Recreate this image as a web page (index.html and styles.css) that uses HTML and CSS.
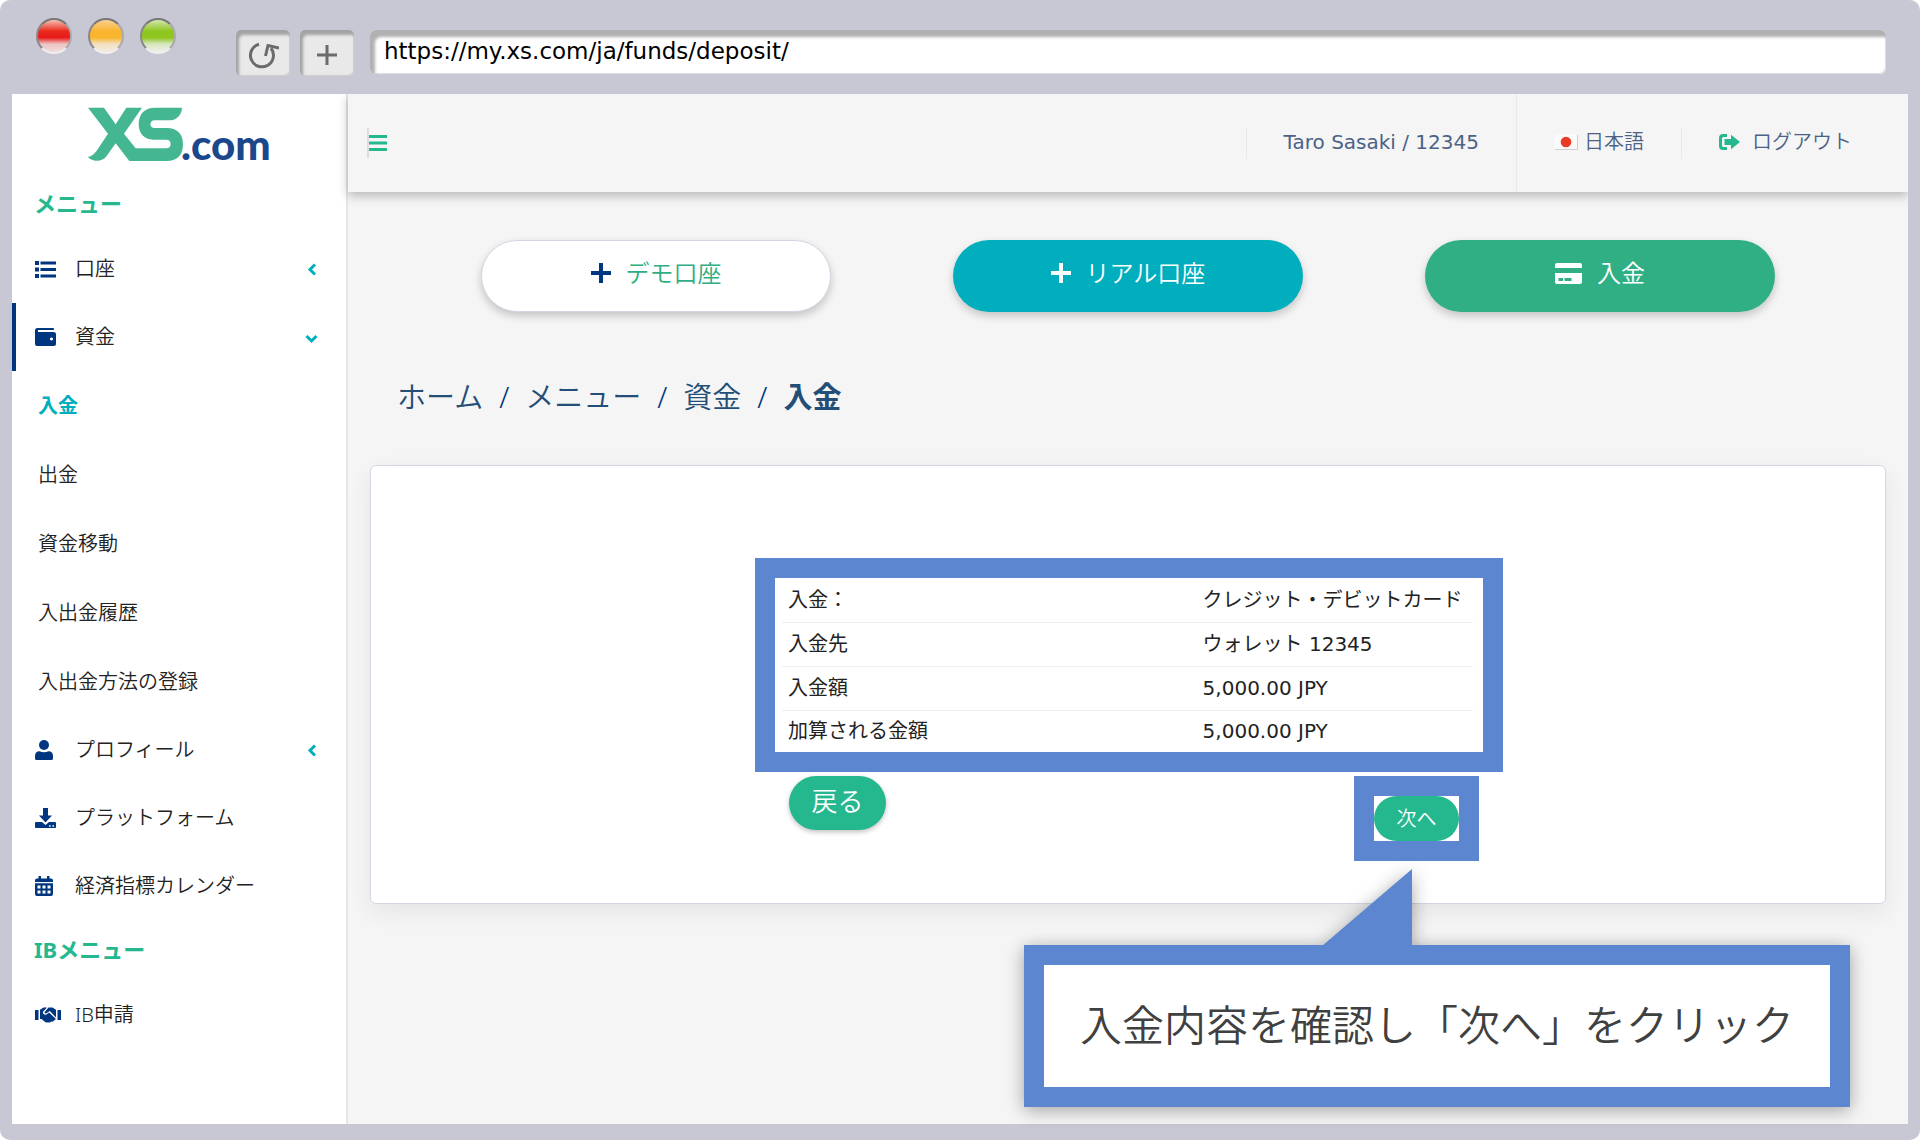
FILE: index.html
```html
<!DOCTYPE html>
<html lang="ja">
<head>
<meta charset="utf-8">
<meta name="viewport" content="width=device-width, initial-scale=1">
<title>XS.com 入金</title>
<link rel="stylesheet" href="styles.css">
</head>
<body>
<div class="browser">
  <div class="browser-bar">
    <div class="lights">
      <span class="light light-red"></span>
      <span class="light light-amber"></span>
      <span class="light light-green"></span>
    </div>
    <div class="browser-buttons">
      <button class="tool" type="button" aria-label="再読み込み">
        <svg width="32" height="28" viewBox="0 0 32 28" fill="none" stroke="#6b6b6b" stroke-width="3"><path d="M12 3.2A11.5 11.5 0 1 0 24 7.200" /><path d="M18.500 15L21 4.500L32 7" /></svg>
      </button>
      <button class="tool" type="button" aria-label="新しいタブ">
        <svg width="22" height="22" viewBox="0 0 22 22" fill="none" stroke="#6b6b6b" stroke-width="3"><path d="M11 1V21M1 11H21"/></svg>
      </button>
    </div>
    <input class="address" type="text" aria-label="アドレス" value="https://my.xs.com/ja/funds/deposit/">
  </div>

  <div class="page">
    <aside class="sidebar">
      <a class="logo" href="#" aria-label="XS.com">
        <svg width="200" height="66" viewBox="0 0 200 66">
          <path transform="translate(-88 -107) scale(.33333)" fill="#45b692" d="M264 323H312L347 373L379 323H426L372 401L407 445H499C508 445 512 439 512 432C512 425 508 419 499 419H460C432 419 416 399 416 372C416 341 435 323 465 323H546C545 345 530 361 508 361H464C447 361 447 384 464 384H500C535 384 549 405 549 433C549 465 533 483 500 483H388L347 430L320 468C309 482 295 483 285 482C275 480 268 476 264 471C277 469 284 461 291 451L324 401Z"/>
          <text class="logo-text" x="93" y="53">.com</text>
        </svg>
      </a>
      <h2 class="nav-title">メニュー</h2>
      <nav class="nav">
        <a class="nav-item" href="#">
          <svg class="nav-icon" width="21" height="17" viewBox="0 0 21 17"><path d="M0 0h4v4H0zM0 6.500h4v4H0zM0 13h4v4H0zM5.500 .5H21v3H5.500zM5.500 7H21v3H5.500zM5.500 13.500H21v3H5.500z"/></svg>
          <span class="nav-label">口座</span>
          <svg class="chevron" width="13" height="13" viewBox="0 0 13 13"><path d="M10 1.500L5 6.500L10 11.500"/></svg>
        </a>
        <a class="nav-item is-open" href="#">
          <svg class="nav-icon" width="21" height="18" viewBox="0 0 21 18"><path fill-rule="evenodd" d="M2.500 0H18q1 0 1 1v1H3v2H18.500Q21 4 21 6V16q0 2-2 2H2Q0 18 0 16V2.500Q0 0 2.500 0zM16.500 9.400a1.600 1.600 0 1 0 .01 0z"/></svg>
          <span class="nav-label">資金</span>
          <svg class="chevron" width="13" height="13" viewBox="0 0 13 13"><path d="M1.500 5L6.500 10L11.500 5"/></svg>
        </a>
        <a class="nav-item nav-sub is-current" href="#">入金</a>
        <a class="nav-item nav-sub" href="#">出金</a>
        <a class="nav-item nav-sub" href="#">資金移動</a>
        <a class="nav-item nav-sub" href="#">入出金履歴</a>
        <a class="nav-item nav-sub" href="#">入出金方法の登録</a>
        <a class="nav-item" href="#">
          <svg class="nav-icon" width="18" height="20" viewBox="0 0 18 20"><circle cx="9" cy="5" r="5"/><path d="M4.500 11.200Q9 13.200 13.500 11.200Q18 11.200 18 16v2.500q0 1.500-1.500 1.500h-15Q0 20 0 18.500V16q0-4.800 4.500-4.800z"/></svg>
          <span class="nav-label">プロフィール</span>
          <svg class="chevron" width="13" height="13" viewBox="0 0 13 13"><path d="M10 1.500L5 6.500L10 11.500"/></svg>
        </a>
        <a class="nav-item" href="#">
          <svg class="nav-icon" width="21" height="20" viewBox="0 0 21 20"><path fill-rule="evenodd" d="M8 0h5v7.500h4L10.500 14.500L4 7.500h4zM0 15q0-1 1-1h6l3.500 3l3.500-3h6q1 0 1 1v4q0 1-1 1H1q-1 0-1-1zM14 17.200v1.600h1.600v-1.600zM17.400 17.200v1.600h1.600v-1.600z"/></svg>
          <span class="nav-label">プラットフォーム</span>
        </a>
        <a class="nav-item" href="#">
          <svg class="nav-icon" width="18" height="20" viewBox="0 0 18 20"><path fill-rule="evenodd" d="M3.500 0h2.500v2.500h6V0h2.500v2.500H16q2 0 2 2V6H0V4.500q0-2 2-2h1.500zM0 7.300h18V18q0 2-2 2H2q-2 0-2-2zM2.500 9.500v3h3v-3zM7.500 9.500v3h3v-3zM12.500 9.500v3h3v-3zM2.500 14.500v3h3v-3zM7.500 14.500v3h3v-3zM12.500 14.500v3h3v-3z"/></svg>
          <span class="nav-label">経済指標カレンダー</span>
        </a>
      </nav>
      <h2 class="nav-title">IBメニュー</h2>
      <nav class="nav">
        <a class="nav-item" href="#">
          <svg class="nav-icon" width="26" height="16" viewBox="0 0 26 16"><path d="M0 3h3.500v10H0zM22.500 3H26v10h-3.500zM5 2.800L8.500 .5H12L7.800 5Q8 8.500 11.500 7.500L14 5.500L20.500 11.500Q21 13 19 13.500Q18 15 16.500 14.500Q15 16 13 15.300Q11 16 9.500 14.500L6.500 12H5zM13.500 .5H17.500L21 2.800V10.500L14.800 4L11 6.500Q9.500 6.500 9.500 5.300z"/></svg>
          <span class="nav-label">IB申請</span>
        </a>
      </nav>
    </aside>

    <div class="content">
      <header class="topbar">
        <button class="menu-toggle" type="button" aria-label="メニュー">
          <svg width="18" height="16" viewBox="0 0 18 16"><path fill="#25b88f" d="M0 0h18v3H0zM0 6.500h18v3H0zM0 13h18v3H0z"/></svg>
        </button>
        <div class="top-items">
          <span class="top-item user">Taro Sasaki / 12345</span>
          <a class="top-item top-item-full" href="#">
            <svg width="24" height="16" viewBox="0 0 24 16"><rect x="1" y="1" width="23" height="15" fill="#d0d0d0"/><rect width="23" height="15" fill="#fafafa"/><circle cx="12" cy="8" r="5.300" fill="#ea3a24"/></svg>
            日本語
          </a>
          <a class="top-item" href="#">
            <svg class="logout-icon" width="21" height="16" viewBox="0 0 21 16"><path fill="#25b88f" d="M8 0v3H4.500Q3 3 3 4.500v7Q3 13 4.500 13H8v3H4Q0 16 0 12V4Q0 0 4 0zM5.500 5H12V.8L21 8L12 15.200V11H5.500z"/></svg>
            ログアウト
          </a>
        </div>
      </header>

      <main class="main">
        <div class="quick">
          <button class="quick-button quick-demo" type="button">
            <svg width="20" height="20" viewBox="0 0 20 20"><path fill="#00367f" d="M8 0h4v8h8v4h-8v8H8v-8H0V8h8z"/></svg>
            デモ口座
          </button>
          <button class="quick-button quick-real" type="button">
            <svg width="20" height="20" viewBox="0 0 20 20"><path fill="#fff" d="M8 0h4v8h8v4h-8v8H8v-8H0V8h8z"/></svg>
            リアル口座
          </button>
          <button class="quick-button quick-deposit" type="button">
            <svg width="27" height="21" viewBox="0 0 27 21"><path fill="#fff" fill-rule="evenodd" d="M2 0h23q2 0 2 2v3H0V2q0-2 2-2zM0 10h27v9q0 2-2 2H2q-2 0-2-2zM3.500 15v3H8v-3zM9.500 15v3H16.500v-3z"/></svg>
            入金
          </button>
        </div>

        <nav class="crumbs" aria-label="パンくず">
          <a href="#">ホーム</a><span>/</span><a href="#">メニュー</a><span>/</span><a href="#">資金</a><span>/</span><strong>入金</strong>
        </nav>

        <section class="card">
          <div class="summary">
            <table class="summary-table">
              <tbody>
                <tr><th scope="row">入金：</th><td>クレジット・デビットカード</td></tr>
                <tr><th scope="row">入金先</th><td>ウォレット 12345</td></tr>
                <tr><th scope="row">入金額</th><td>5,000.00 JPY</td></tr>
                <tr><th scope="row">加算される金額</th><td>5,000.00 JPY</td></tr>
              </tbody>
            </table>
          </div>
          <div class="actions">
            <button class="back" type="button">戻る</button>
            <div class="next-frame">
              <button class="next" type="button">次へ</button>
              <div class="callout">
                <svg class="callout-tip" width="90" height="77" viewBox="0 0 90 77"><path fill="#5c86cf" d="M90 0V77H0z"/></svg>
                <p class="callout-text">入金内容を確認し「次へ」をクリック</p>
              </div>
            </div>
          </div>
        </section>
      </main>
    </div>
  </div>
</div>
</body>
</html>
```
FILE: styles.css
```css
* {
  box-sizing: border-box;
}

body {
  margin: 0;
  background: #fff;
  color: #222;
  font: 350 20px/30px "Noto Sans", "Noto Sans CJK JP", sans-serif;
}

a {
  color: inherit;
  text-decoration: none;
}

button,
input {
  font: inherit;
}

button {
  padding: 0;
  border: 0;
  cursor: pointer;
}

svg {
  flex: none;
}

.browser {
  display: flex;
  flex-direction: column;
  min-height: 100vh;
  padding: 0 12px 16px;
  border-radius: 10px;
  background: #c8c7d4;
}

/* Browser bar */

.browser-bar {
  display: flex;
  align-items: flex-start;
  height: 94px;
  padding: 18px 22px 0 24px;
}

.lights {
  display: flex;
  gap: 16px;
}

.light {
  width: 36px;
  height: 36px;
  border: 2px solid;
  border-color: #777 #aaa #eee #888;
  border-radius: 50%;
}

.light-red {
  background: linear-gradient(#f4c0b4, #ea2a1c 35%, #e81a1a 55%, #eec4c4 75%, #f0dcdc);
}

.light-amber {
  background: linear-gradient(#f7cf94, #fab52e 35%, #fab52e 55%, #f3dfc0 75%, #f2eadf);
}

.light-green {
  background: linear-gradient(#d3e6b0, #8fc61f 35%, #8fc61f 55%, #d6e6bd 75%, #eef1e8);
}

.browser-buttons {
  display: flex;
  gap: 10px;
  margin: 12px 16px 0 60px;
}

.tool {
  display: flex;
  align-items: center;
  justify-content: center;
  width: 54px;
  height: 46px;
  padding: 4px 0 0 0;
  border-radius: 5px;
  background: #e9e9e9;
  box-shadow: inset 3px 5px 3px #a3a3a3, inset -1px -1px 1px #ccc;
}

.address {
  flex: 1;
  min-width: 0;
  height: 44px;
  margin-top: 12px;
  padding: 0 14px 2px;
  border: 0;
  border-radius: 6px;
  background: #fff;
  box-shadow: inset 5px 7px 3px #b1b1b1, inset -1px -1px 1px #ddd;
  color: #000;
  font-family: "DejaVu Sans", sans-serif;
  font-size: 23px;
  font-weight: 400;
}

/* Page */

.page {
  display: flex;
  flex: 1;
  background: #f5f5f5;
}

.sidebar {
  flex: none;
  width: 336px;
  border-right: 2px solid #e6e6e6;
  background: #fff;
}

.logo {
  display: block;
  height: 80px;
  padding: 13px 0 0 76px;
}

.logo-text {
  fill: #1b478d;
  font: 900 42px Lato, sans-serif;
}

.nav-title {
  margin: 0;
  padding: 0 0 2px 22px;
  color: #25b88f;
  font-size: 22px;
  font-weight: 700;
  line-height: 59px;
}

.nav-item {
  display: flex;
  align-items: center;
  height: 68px;
  padding: 0 28px 0 23px;
}

.nav-icon {
  margin-right: auto;
  fill: #00367f;
}

.nav-icon + .nav-label {
  position: absolute;
  margin-left: 40px;
}

.chevron {
  fill: none;
  stroke: #00aebe;
  stroke-width: 3;
}

.is-open {
  padding-left: 19px;
  border-left: 4px solid #00367f;
}

.nav-sub {
  height: 69px;
  padding-left: 26px;
}

.is-current {
  color: #00aebe;
  font-weight: 700;
}

.content {
  flex: 1;
  min-width: 0;
}

.topbar {
  display: flex;
  align-items: center;
  justify-content: space-between;
  height: 98px;
  padding-left: 19px;
  background: #f5f5f5;
  box-shadow: 0 4px 10px rgba(0, 0, 0, .25);
  clip-path: inset(0 0 -20px -12px);
}

.menu-toggle {
  display: flex;
  align-items: center;
  height: 30px;
  border-left: 2px solid #ddd;
  background: none;
}

.top-items {
  display: flex;
  align-items: center;
  color: #4c6285;
}

.top-item {
  display: flex;
  align-items: center;
  gap: 6px;
  height: 32px;
  padding: 0 37px 2px;
  border-left: 1px solid #e9e9e9;
}

.user {
  font-family: "DejaVu Sans", sans-serif;
  font-weight: 400;
}

.top-item-full {
  height: 98px;
}

.top-item:last-child {
  gap: 12px;
  padding-right: 56px;
}

.main {
  padding: 48px 22px;
}

.quick {
  display: grid;
  grid-template-columns: repeat(3, 1fr);
  justify-items: center;
  padding: 0 50px;
}

.quick-button {
  display: flex;
  align-items: center;
  justify-content: center;
  gap: 15px;
  width: 350px;
  max-width: 90%;
  height: 72px;
  padding-bottom: 6px;
  border-radius: 36px;
  box-shadow: 0 4px 8px rgba(0, 0, 0, .2);
  color: #fff;
  font-size: 24px;
}

.quick-demo {
  border: 1px solid #d3d7e2;
  background: #fff;
  color: #2fae84;
}

.quick-real {
  background: #00aebe;
}

.quick-deposit {
  background: #30af84;
}

.crumbs {
  display: flex;
  align-items: center;
  gap: 16px;
  margin: 65px 0 48px;
  padding-left: 27px;
  color: #234e77;
  font-size: 29px;
  line-height: 40px;
}

.crumbs span {
  color: #00367f;
}

.card {
  padding: 92px 0 42px 2px;
  border: 1px solid #d3d7e2;
  border-radius: 6px;
  background: #fff;
  box-shadow: 0 8px 24px rgba(0, 0, 0, .07);
}

.summary,
.actions {
  width: 748px;
  margin: 0 auto;
}

.summary {
  padding: 0 10px 0 7px;
  border: 20px solid #5c86cf;
}

.summary-table {
  width: 100%;
  border-collapse: collapse;
  table-layout: fixed;
  font-family: "DejaVu Sans", "Noto Sans CJK JP", sans-serif;
}

.summary-table th,
.summary-table td {
  height: 44px;
  padding: 0 0 0 6px;
  font-weight: 400;
  text-align: left;
  white-space: nowrap;
}

.summary-table tr:last-child > * {
  height: 42px;
}

.summary-table th {
  width: 60%;
}

.summary-table tr + tr {
  border-top: 1px solid #efefef;
}

.actions {
  display: flex;
  align-items: flex-start;
  justify-content: space-between;
  padding: 4px 24px 0 34px;
}

.back,
.next {
  background: #25b88f;
  color: #fff;
  box-shadow: 0 2px 5px rgba(0, 0, 0, .25);
}

.back {
  width: 97px;
  height: 54px;
  padding-bottom: 4px;
  border-radius: 27px;
  font-size: 26px;
}

.next-frame {
  position: relative;
  border: 20px solid #5c86cf;
}

.next {
  display: block;
  width: 85px;
  height: 45px;
  border-radius: 23px;
  box-shadow: none;
}

/* Callout laid over the page, pointing at the next button */

.callout {
  position: absolute;
  top: 149px;
  right: -391px;
  width: 826px;
  filter: drop-shadow(0 3px 9px rgba(0, 0, 0, .35));
}

.callout-tip {
  position: absolute;
  top: -76px;
  left: 298px;
}

.callout-text {
  margin: 0;
  padding: 30px 0 32px;
  border: 20px solid #5c86cf;
  background: #fff;
  color: #404040;
  font-size: 42px;
  line-height: 60px;
  text-align: center;
  white-space: nowrap;
}
```
